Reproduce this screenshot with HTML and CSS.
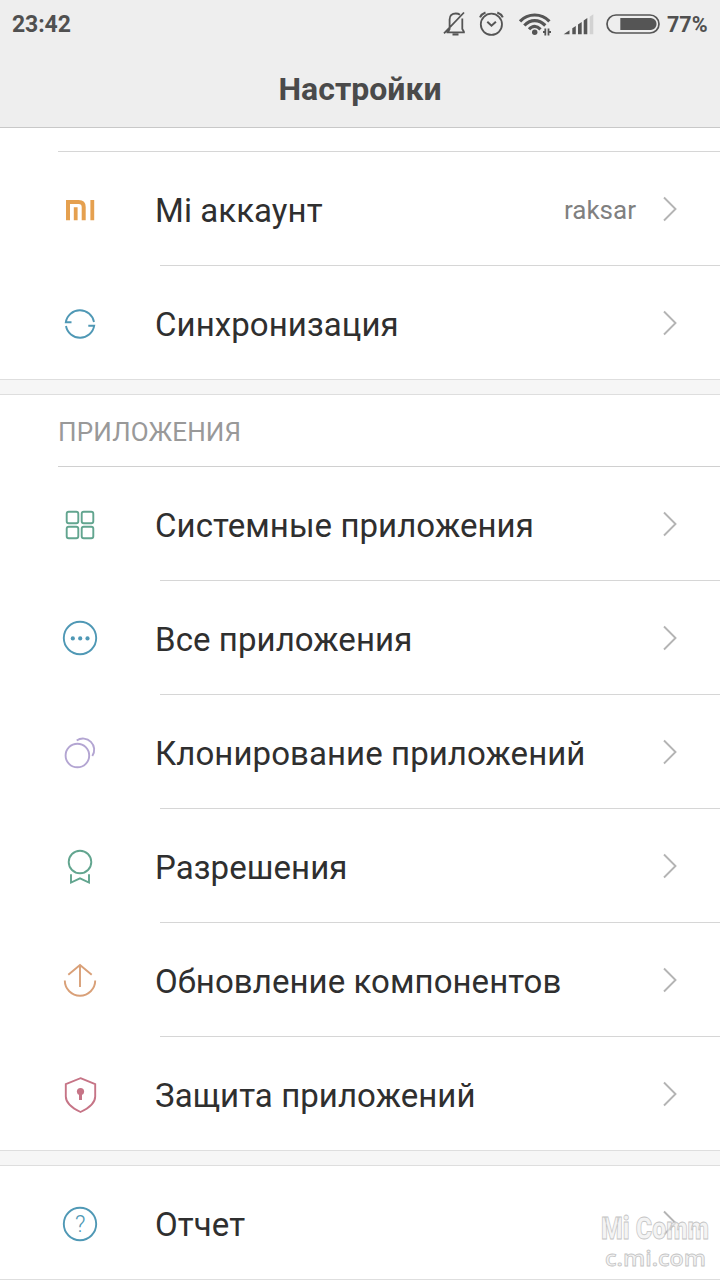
FILE: index.html
```html
<!DOCTYPE html>
<html lang="ru">
<head>
    <meta charset="UTF-8">
    <meta name="viewport" content="width=device-width, initial-scale=1.0">
    <title>Настройки</title>
    <link rel="stylesheet" href="styles.css">
</head>
<body>
    <header class="header">
        <div class="status-bar">
            <span class="clock">23:42</span>
            <div class="status-icons">
                <svg width="24" height="30" viewBox="0 0 24 30" fill="none" stroke="#555" stroke-width="1.8">
                    <path d="M3.5 22.3h18.3M5 22l1.6-3V9.5C6.6 5.5 9 3.500 12.800 3.500c1.800 0 3.200.5 4.200 1.200M19.300 8.500V19l1.800 3M1 23.300L21 2.500M9.500 24.500h6"/>
                </svg>
                <svg width="28" height="30" viewBox="0 0 28 30" fill="none" stroke="#555" stroke-width="1.8">
                    <circle cx="13.400" cy="14.300" r="10.600"/>
                    <path stroke-width="2" d="M9.300 11.700l4.200 4 4.400-4M2 7.300Q3.500 4 7.500 2.500M19.300 2.500Q23.300 4 24.800 7.300"/>
                </svg>
                <svg width="35" height="30" viewBox="0 0 35 30" fill="none" stroke="#555" stroke-width="3.200">
                    <path d="M3 11.300Q9 5 17.700 5T32.400 11.300M7.300 15.500Q12 10.700 17.700 10.700T28.300 15.500M12 19.300Q14.700 16.300 17.700 16.300T23.500 19.300"/>
                    <circle cx="17.700" cy="22.300" r="2.700" fill="#555" stroke="none"/>
                    <path stroke-width="1.800" d="M28.300 18.500v7M31.500 18.500v7M26 22h2.500M31.300 22h2.700"/>
                </svg>
                <svg width="31" height="30" viewBox="0 0 31 30" fill="#555">
                    <path d="M.7 24.300l5.800-4v4zM9.300 24.300v-6l3.500-2.300v8.300zM15 24.300V14.500l3.700-2.500v12.300zM20.700 24.300v-13.800L24.300 8v16.300z"/>
                    <path fill="#d2d2d2" d="M26.700 24.300V6.700l3.600-2.400v20z"/>
                </svg>
                <svg width="55" height="30" viewBox="0 0 55 30">
                    <rect x="2" y="5" width="52" height="18" rx="9" fill="none" stroke="#555" stroke-width="1.700"/>
                    <path d="M15.300 8H46q5.500 1 5.500 6t-5.500 6H15.300z" fill="#555"/>
                </svg>
                <span class="percent">77%</span>
            </div>
        </div>
        <h1 class="title">Настройки</h1>
    </header>

    <main>
        <div class="list-start"></div>
        <ul class="list">
            <li class="row">
                <svg class="icon orange" viewBox="0 0 40 40">
                    <path d="M8 30.300V12h10.700q5 0 5 5v13.300" stroke-width="4"/>
                    <path d="M15.700 17.300v13M32.300 10v20.300" stroke-width="3.800"/>
                </svg>
                <div class="content">
                    <span class="label">Mi аккаунт</span>
                    <span class="value">raksar</span>
                    <svg class="chevron" viewBox="0 0 16 26"><path d="M2 1.500L13.500 13 2 24.500"/></svg>
                </div>
            </li>
            <li class="row">
                <svg class="icon blue" viewBox="0 0 40 40">
                    <path d="M11.500 18.300H5.800A14.300 14.300 0 0 1 34 18M28.300 21.700h5.900A14.300 14.300 0 0 1 6 22"/>
                </svg>
                <div class="content">
                    <span class="label">Синхронизация</span>
                    <svg class="chevron" viewBox="0 0 16 26"><path d="M2 1.500L13.500 13 2 24.500"/></svg>
                </div>
            </li>
        </ul>

        <div class="divider"></div>

        <h2 class="section-title">ПРИЛОЖЕНИЯ</h2>
        <ul class="list">
            <li class="row">
                <svg class="icon green" viewBox="0 0 40 40">
                    <rect x="6.700" y="6.700" width="11.600" height="11.600" rx="2"/>
                    <rect x="21.700" y="6.700" width="11.600" height="11.600" rx="2"/>
                    <rect x="6.700" y="21.700" width="11.600" height="11.600" rx="2"/>
                    <rect x="21.700" y="21.700" width="11.600" height="11.600" rx="2"/>
                </svg>
                <div class="content">
                    <span class="label">Системные приложения</span>
                    <svg class="chevron" viewBox="0 0 16 26"><path d="M2 1.500L13.500 13 2 24.500"/></svg>
                </div>
            </li>
            <li class="row">
                <svg class="icon blue" viewBox="0 0 40 40">
                    <circle cx="20" cy="19" r="16.200"/>
                    <g class="dots"><circle cx="12.800" cy="19.400" r="2.100"/><circle cx="20.200" cy="19.400" r="2.100"/><circle cx="27.500" cy="19.400" r="2.100"/></g>
                </svg>
                <div class="content">
                    <span class="label">Все приложения</span>
                    <svg class="chevron" viewBox="0 0 16 26"><path d="M2 1.500L13.500 13 2 24.500"/></svg>
                </div>
            </li>
            <li class="row">
                <svg class="icon purple" viewBox="0 0 40 40">
                    <circle cx="17.400" cy="22.500" r="11.800"/>
                    <path d="M16.700 7.500A11.200 11.200 0 0 1 32.300 23"/>
                </svg>
                <div class="content">
                    <span class="label">Клонирование приложений</span>
                    <svg class="chevron" viewBox="0 0 16 26"><path d="M2 1.500L13.500 13 2 24.500"/></svg>
                </div>
            </li>
            <li class="row">
                <svg class="icon green" viewBox="0 0 40 40">
                    <circle cx="20" cy="15" r="11.300"/>
                    <path d="M11 27.300v8.200l9-4.200 9 4.200v-8.200"/>
                </svg>
                <div class="content">
                    <span class="label">Разрешения</span>
                    <svg class="chevron" viewBox="0 0 16 26"><path d="M2 1.500L13.500 13 2 24.500"/></svg>
                </div>
            </li>
            <li class="row">
                <svg class="icon peach" viewBox="0 0 40 40">
                    <path d="M20 26V4M8.300 13.700L20 4l11.700 9.700M4.800 19.500a15.200 15.200 0 0 0 30.400 0"/>
                </svg>
                <div class="content">
                    <span class="label">Обновление компонентов</span>
                    <svg class="chevron" viewBox="0 0 16 26"><path d="M2 1.500L13.500 13 2 24.500"/></svg>
                </div>
            </li>
            <li class="row">
                <svg class="icon red" viewBox="0 0 40 40">
                    <path d="M20.500 3.200l14.700 6v12.300c0 6.500-6 11.500-14.700 15.500C12 33 5.800 28 5.800 21.500V9.200z"/>
                    <circle class="dots" cx="20.500" cy="16.500" r="3.600"/>
                    <path d="M20.500 16v9" stroke-width="3"/>
                </svg>
                <div class="content">
                    <span class="label">Защита приложений</span>
                    <svg class="chevron" viewBox="0 0 16 26"><path d="M2 1.500L13.500 13 2 24.500"/></svg>
                </div>
            </li>
        </ul>

        <div class="divider"></div>

        <ul class="list">
            <li class="row">
                <svg class="icon blue" viewBox="0 0 40 40">
                    <circle cx="20" cy="20" r="16.200"/>
                    <text class="question" x="20.300" y="28.300" text-anchor="middle">?</text>
                </svg>
                <div class="content">
                    <span class="label">Отчет</span>
                    <svg class="chevron" viewBox="0 0 16 26"><path d="M2 1.500L13.500 13 2 24.500"/></svg>
                </div>
            </li>
        </ul>
    </main>

    <svg class="watermark" width="120" height="70" viewBox="0 0 120 70">
        <text class="wm-name" x="1" y="28.500" textLength="108" lengthAdjust="spacingAndGlyphs">Mi Comm</text>
        <text class="wm-site" x="5" y="55.500" textLength="101" lengthAdjust="spacingAndGlyphs">c.mi.com</text>
    </svg>
</body>
</html>
```
FILE: styles.css
```css
* { box-sizing: border-box; }
body {
    position: relative;
    width: 720px;
    height: 1280px;
    margin: 0;
    overflow: hidden;
    background: #fff;
    color: #2f2f2f;
    font-family: Roboto, 'Noto Sans', sans-serif;
}
.header {
    height: 128px;
    background: #eee;
    border-bottom: 1px solid #c8c8c8;
}
.status-bar {
    display: flex;
    justify-content: space-between;
    height: 50px;
    padding: 10px 12px 0 12px;
    color: #505050;
    font-weight: 700;
    line-height: 30px;
}
.clock {
    font-size: 23px;
    letter-spacing: -0.1px;
}
.status-icons {
    display: flex;
    gap: 11px;
}
.percent {
    width: 41px;
    margin-left: -4px;
    font-size: 21.5px;
    white-space: nowrap;
}
.title {
    margin: 0;
    color: #4a4a4a;
    font-size: 32px;
    font-weight: 700;
    line-height: 78px;
    text-align: center;
}
.list-start {
    height: 24px;
    margin-left: 58px;
    border-bottom: 1px solid #d6d6d6;
}
.list {
    margin: 0;
    padding: 0;
    list-style: none;
}
.row {
    display: flex;
    height: 114px;
    padding-left: 60px;
}
.icon {
    width: 40px;
    height: 40px;
    margin: 38px 60px 0 0;
    fill: none;
    stroke: currentColor;
    stroke-width: 1.9;
}
.content {
    display: flex;
    flex: 1;
    align-items: center;
    padding-right: 42px;
    border-bottom: 1px solid #d6d6d6;
}
.row:last-child {
    border-bottom: 1px solid #dedede;
}
.row:last-child .content { border-bottom: none; }
.label {
    flex: 1;
    margin-left: -5px;
    padding-top: 4px;
    font-size: 33px;
    letter-spacing: 0.07px;
    white-space: nowrap;
}
.value {
    margin-right: 26px;
    padding-top: 3px;
    color: #808080;
    font-size: 26px;
}
.chevron {
    width: 16px;
    height: 26px;
    margin-top: 1px;
    fill: none;
    stroke: #b4b4b4;
    stroke-width: 1.9;
}
.divider {
    height: 15px;
    background: #f6f6f6;
    border-bottom: 1px solid #dedede;
}
.section-title {
    height: 72px;
    margin: 0 0 0 58px;
    border-bottom: 1px solid #d0d0d0;
    color: #999;
    font-size: 26px;
    font-weight: 400;
    letter-spacing: 0.15px;
    line-height: 74px;
}
.orange { color: #e5a04f; }
.blue { color: #4f98b5; }
.green { color: #62a58f; }
.purple { color: #b3a5d2; }
.peach { color: #d9a078; }
.red { color: #c67486; }
.dots {
    fill: currentColor;
    stroke: none;
}
.question {
    fill: currentColor;
    stroke: none;
    font-size: 23px;
    font-weight: 300;
}
.watermark {
    position: absolute;
    right: 0;
    bottom: 0;
}
.wm-name, .wm-site {
    fill: rgba(240, 240, 240, 0.7);
    stroke: #c4c4c4;
    stroke-width: 0.8;
}
.wm-name {
    font-size: 31px;
    font-weight: 900;
}
.wm-site {
    font-family: 'Open Sans', sans-serif;
    font-size: 22px;
    font-weight: 600;
}
```
